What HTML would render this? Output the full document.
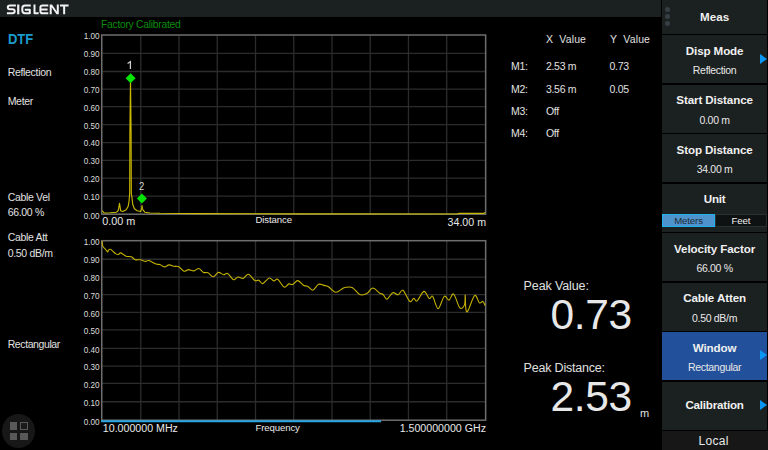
<!DOCTYPE html>
<html><head><meta charset="utf-8">
<style>
*{margin:0;padding:0;box-sizing:border-box}
html,body{width:768px;height:450px;overflow:hidden;background:#000;font-family:"Liberation Sans",sans-serif;color:#e6e6e6}
.a{position:absolute;white-space:nowrap;line-height:1}
#hdr{position:absolute;left:0;top:0;width:661px;height:17.25px;background:#1a2120}
#logo{left:7px;top:2.5px;font-size:13px;font-weight:bold;color:#f2f2f2;letter-spacing:0.9px}
.lbl{font-size:10.5px;color:#e0e0e0;letter-spacing:-0.32px}
.yl{font-size:7.6px;font-weight:bold;color:#dcdcdc;text-align:right;width:30px}
.pan{position:absolute;left:662px;width:105.2px;background:#1b2020}
.pt{position:absolute;left:0;width:105.2px;text-align:center;font-size:11.6px;font-weight:bold;color:#f0f0f0;line-height:1;white-space:nowrap}
.ps{position:absolute;left:0;width:105.2px;text-align:center;font-size:10.5px;letter-spacing:-0.32px;color:#e8e8e8;line-height:1;white-space:nowrap}
.tri{position:absolute;right:0;width:0;height:0;border-top:5px solid transparent;border-bottom:5px solid transparent;border-left:7.5px solid #0a96f4}
</style></head><body>
<div id="hdr"></div>
<svg style="position:absolute;left:0;top:0" width="72" height="18" viewBox="0 0 72 18">
<g fill="none" stroke="#f2f2f2" stroke-width="2.0" stroke-linecap="butt" stroke-linejoin="round">
<path d="M15.9,5.5 H10.0 Q7.8,5.5 7.8,7.35 Q7.8,9.25 10.0,9.25 H12.5 Q14.7,9.25 14.7,11.25 Q14.7,13.3 12.5,13.3 H6.9"/>
<path d="M18.25,4.5 V14.3" stroke-width="2.2"/>
<path d="M30.8,5.5 H25.0 Q22.3,5.5 22.3,8.2 V10.6 Q22.3,13.3 25.0,13.3 H29.8 V9.8 H24.8"/>
<path d="M34.5,4.5 V13.3 H38.7"/>
<path d="M48.3,5.5 H42.5 Q40.4,5.5 40.4,7.6 V11.2 Q40.4,13.3 42.5,13.3 H48.3 M40.4,9.4 H47.6"/>
<path d="M60.0,5.5 H68.6 M64.15,5.5 V14.3"/>
</g>
<polygon fill="#f2f2f2" points="49.7,4.5 52.0,4.5 56.8,11.6 56.8,4.5 58.8,4.5 58.8,14.3 56.5,14.3 51.7,7.2 51.7,14.3 49.7,14.3"/>
</svg>

<div class="a" style="left:7.8px;top:31.1px;font-size:15px;font-weight:bold;color:#1b9ccf;transform:scaleX(0.865);transform-origin:0 0">DTF</div>
<div class="a lbl" style="left:7.7px;top:66.9px">Reflection</div>
<div class="a lbl" style="left:7.7px;top:95.5px">Meter</div>
<div class="a lbl" style="left:7.7px;top:191.5px">Cable Vel</div>
<div class="a lbl" style="left:7.7px;top:206.9px">66.00 %</div>
<div class="a lbl" style="left:7.7px;top:231.6px">Cable Att</div>
<div class="a lbl" style="left:7.7px;top:247.6px">0.50 dB/m</div>
<div class="a lbl" style="left:7.7px;top:338.9px;letter-spacing:-0.4px">Rectangular</div>

<div class="a" style="left:101px;top:19.5px;font-size:10.3px;color:#0c8c0c;letter-spacing:-0.26px">Factory Calibrated</div>

<!-- graphs -->
<svg style="position:absolute;left:0;top:0" width="768" height="450" viewBox="0 0 768 450">
<g stroke="#2c2c2c" stroke-width="1.3" fill="none">
<line x1="140.80" y1="35.0" x2="140.80" y2="214.2"/>
<line x1="179.03" y1="35.0" x2="179.03" y2="214.2"/>
<line x1="217.27" y1="35.0" x2="217.27" y2="214.2"/>
<line x1="255.51" y1="35.0" x2="255.51" y2="214.2"/>
<line x1="293.75" y1="35.0" x2="293.75" y2="214.2"/>
<line x1="331.98" y1="35.0" x2="331.98" y2="214.2"/>
<line x1="370.22" y1="35.0" x2="370.22" y2="214.2"/>
<line x1="408.46" y1="35.0" x2="408.46" y2="214.2"/>
<line x1="446.69" y1="35.0" x2="446.69" y2="214.2"/>
<line x1="101.75" y1="53.35" x2="485.65" y2="53.35"/>
<line x1="101.75" y1="71.50" x2="485.65" y2="71.50"/>
<line x1="101.75" y1="89.05" x2="485.65" y2="89.05"/>
<line x1="101.75" y1="106.65" x2="485.65" y2="106.65"/>
<line x1="101.75" y1="124.60" x2="485.65" y2="124.60"/>
<line x1="101.75" y1="142.55" x2="485.65" y2="142.55"/>
<line x1="101.75" y1="160.35" x2="485.65" y2="160.35"/>
<line x1="101.75" y1="178.10" x2="485.65" y2="178.10"/>
<line x1="101.75" y1="196.10" x2="485.65" y2="196.10"/>
<line x1="140.80" y1="240.7" x2="140.80" y2="420.2"/>
<line x1="179.03" y1="240.7" x2="179.03" y2="420.2"/>
<line x1="217.27" y1="240.7" x2="217.27" y2="420.2"/>
<line x1="255.51" y1="240.7" x2="255.51" y2="420.2"/>
<line x1="293.75" y1="240.7" x2="293.75" y2="420.2"/>
<line x1="331.98" y1="240.7" x2="331.98" y2="420.2"/>
<line x1="370.22" y1="240.7" x2="370.22" y2="420.2"/>
<line x1="408.46" y1="240.7" x2="408.46" y2="420.2"/>
<line x1="446.69" y1="240.7" x2="446.69" y2="420.2"/>
<line x1="101.75" y1="259.25" x2="485.65" y2="259.25"/>
<line x1="101.75" y1="277.15" x2="485.65" y2="277.15"/>
<line x1="101.75" y1="294.65" x2="485.65" y2="294.65"/>
<line x1="101.75" y1="312.45" x2="485.65" y2="312.45"/>
<line x1="101.75" y1="329.90" x2="485.65" y2="329.90"/>
<line x1="101.75" y1="348.30" x2="485.65" y2="348.30"/>
<line x1="101.75" y1="366.10" x2="485.65" y2="366.10"/>
<line x1="101.75" y1="383.40" x2="485.65" y2="383.40"/>
<line x1="101.75" y1="401.75" x2="485.65" y2="401.75"/>
</g>
<g stroke="#6e6e6e" stroke-width="1.5" fill="none">
<rect x="101.75" y="35.0" width="383.9" height="179.2"/>
<rect x="101.75" y="240.7" width="383.9" height="179.5"/>
</g>
<g font-family="Liberation Sans" font-size="8.2" fill="#dcdcdc"><text x="99.6" y="38.90" text-anchor="end">1.00</text>
<text x="99.6" y="57.25" text-anchor="end">0.90</text>
<text x="99.6" y="75.40" text-anchor="end">0.80</text>
<text x="99.6" y="92.95" text-anchor="end">0.70</text>
<text x="99.6" y="110.55" text-anchor="end">0.60</text>
<text x="99.6" y="128.50" text-anchor="end">0.50</text>
<text x="99.6" y="146.45" text-anchor="end">0.40</text>
<text x="99.6" y="164.25" text-anchor="end">0.30</text>
<text x="99.6" y="182.00" text-anchor="end">0.20</text>
<text x="99.6" y="200.00" text-anchor="end">0.10</text>
<text x="99.6" y="219.00" text-anchor="end">0.00</text>
<text x="99.6" y="244.90" text-anchor="end">1.00</text>
<text x="99.6" y="263.45" text-anchor="end">0.90</text>
<text x="99.6" y="281.35" text-anchor="end">0.80</text>
<text x="99.6" y="298.85" text-anchor="end">0.70</text>
<text x="99.6" y="316.65" text-anchor="end">0.60</text>
<text x="99.6" y="334.10" text-anchor="end">0.50</text>
<text x="99.6" y="352.50" text-anchor="end">0.40</text>
<text x="99.6" y="370.30" text-anchor="end">0.30</text>
<text x="99.6" y="387.60" text-anchor="end">0.20</text>
<text x="99.6" y="405.95" text-anchor="end">0.10</text>
<text x="99.6" y="425.10" text-anchor="end">0.00</text></g>
<path d="M102.2,210.6 L104.1,213.0 L110.3,212.8 L116.5,212.2 L118.3,210.5 L119.5,203.3 L120.7,210.8 L122.7,211.5 L126.2,209.8 L128.2,206.3 L129.1,200.8 L129.7,193.5 L129.9,133.0 L130.5,78.5 L131.1,133.0 L131.3,193.5 L131.9,197.0 L132.7,204.3 L134.4,208.8 L137.2,210.8 L140.6,211.5 L141.7,208.4 L142.0,205.5 L142.4,208.4 L143.0,209.8 L144.8,212.2 L150.0,213.0 L160.0,213.3 L200.0,213.6 L300.0,213.8 L457.0,214.0 L459.0,213.4 L484.0,213.3 L485.2,212.6" fill="none" stroke="#c8b800" stroke-width="1.15" stroke-linejoin="round"/>
<path d="M102.00,241.00 C102.15,241.90 102.37,245.07 102.90,246.40 C103.43,247.73 104.42,248.08 105.20,249.00 C105.98,249.92 107.05,251.72 107.60,251.90 C108.15,252.08 108.03,250.53 108.50,250.10 C108.97,249.67 109.65,249.08 110.40,249.30 C111.15,249.52 112.13,250.68 113.00,251.40 C113.87,252.12 114.73,253.08 115.60,253.60 C116.47,254.12 117.33,254.62 118.20,254.50 C119.07,254.38 119.50,252.62 120.80,252.90 C122.10,253.18 124.25,255.55 126.00,256.20 C127.75,256.85 129.77,256.22 131.30,256.80 C132.83,257.38 133.68,259.20 135.20,259.70 C136.72,260.20 138.67,259.52 140.40,259.80 C142.13,260.08 144.20,261.28 145.60,261.40 C147.00,261.52 147.07,260.07 148.80,260.50 C150.53,260.93 154.15,263.32 156.00,264.00 C157.85,264.68 158.48,264.12 159.90,264.60 C161.32,265.08 162.98,266.85 164.50,266.90 C166.02,266.95 167.38,265.00 169.00,264.90 C170.62,264.80 172.57,266.00 174.20,266.30 C175.83,266.60 177.17,265.88 178.80,266.70 C180.43,267.52 182.38,270.72 184.00,271.20 C185.62,271.68 186.87,269.65 188.50,269.60 C190.13,269.55 192.07,271.08 193.80,270.90 C195.53,270.72 197.28,268.25 198.90,268.50 C200.52,268.75 201.98,271.68 203.50,272.40 C205.02,273.12 206.38,272.08 208.00,272.80 C209.62,273.52 211.47,276.77 213.20,276.70 C214.93,276.63 216.67,272.73 218.40,272.40 C220.13,272.07 222.07,274.53 223.60,274.70 C225.13,274.87 225.97,272.57 227.60,273.40 C229.23,274.23 231.67,279.10 233.40,279.70 C235.13,280.30 236.37,277.22 238.00,277.00 C239.63,276.78 241.47,278.85 243.20,278.40 C244.93,277.95 246.45,273.93 248.40,274.30 C250.35,274.67 253.17,279.62 254.90,280.60 C256.63,281.58 257.50,279.70 258.80,280.20 C260.10,280.70 260.97,283.97 262.70,283.60 C264.43,283.23 267.35,278.45 269.20,278.00 C271.05,277.55 272.38,280.68 273.80,280.90 C275.22,281.12 275.97,278.27 277.70,279.30 C279.43,280.33 282.35,286.33 284.20,287.10 C286.05,287.87 287.40,284.33 288.80,283.90 C290.20,283.47 291.10,285.05 292.60,284.50 C294.10,283.95 295.95,280.45 297.80,280.60 C299.65,280.75 302.07,284.45 303.70,285.40 C305.33,286.35 306.08,285.50 307.60,286.30 C309.12,287.10 310.97,290.53 312.80,290.20 C314.63,289.87 316.75,285.10 318.60,284.30 C320.45,283.50 322.27,285.00 323.90,285.40 C325.53,285.80 326.45,285.55 328.40,286.70 C330.35,287.85 333.22,292.02 335.60,292.30 C337.98,292.58 340.97,289.23 342.70,288.40 C344.43,287.57 344.37,287.42 346.00,287.30 C347.63,287.18 350.22,286.50 352.50,287.70 C354.78,288.90 357.32,293.52 359.70,294.50 C362.08,295.48 364.63,294.68 366.80,293.60 C368.97,292.52 370.53,288.07 372.70,288.00 C374.87,287.93 378.07,292.12 379.80,293.20 C381.53,294.28 381.90,293.52 383.10,294.50 C384.30,295.48 385.38,299.40 387.00,299.10 C388.62,298.80 390.93,293.42 392.80,292.70 C394.67,291.98 396.52,295.20 398.20,294.80 C399.88,294.40 400.98,289.20 402.90,290.30 C404.82,291.40 407.88,300.05 409.70,301.40 C411.52,302.75 412.57,298.48 413.80,298.40 C415.03,298.32 415.42,302.07 417.10,300.90 C418.78,299.73 421.87,291.82 423.90,291.40 C425.93,290.98 427.83,297.57 429.30,298.40 C430.77,299.23 431.23,294.70 432.70,296.40 C434.17,298.10 436.18,308.60 438.10,308.60 C440.02,308.60 442.38,297.82 444.20,296.40 C446.02,294.98 447.42,300.48 449.00,300.10 C450.58,299.72 451.90,292.80 453.70,294.10 C455.50,295.40 458.00,306.10 459.80,307.90 C461.60,309.70 463.60,307.05 464.50,304.90 C465.40,302.75 464.97,294.27 465.20,295.00 C465.43,295.73 465.43,306.70 465.90,309.30 C466.37,311.90 466.53,312.90 468.00,310.60 C469.47,308.30 472.80,296.78 474.70,295.50 C476.60,294.22 478.05,301.92 479.40,302.90 C480.75,303.88 481.85,300.97 482.80,301.40 C483.75,301.83 484.72,304.82 485.10,305.50" fill="none" stroke="#c4b200" stroke-width="1.1" stroke-linejoin="round"/>
<line x1="101" y1="421.2" x2="381" y2="421.2" stroke="#29a6e0" stroke-width="2.1"/>
<polygon points="130.6,73.3 135.6,78.3 130.6,83.3 125.6,78.3" fill="#06e406"/>
<polygon points="141.9,193.4 146.9,198.4 141.9,203.4 136.9,198.4" fill="#06e406"/>
<g font-family="Liberation Sans" font-size="9.8" fill="#d4d4d4" text-anchor="middle">
</g><path d="M127.6,63.6 L130.4,61.6 L130.4,69.1" fill="none" stroke="#d0d0d0" stroke-width="1.25" stroke-linejoin="miter"/><g font-family="Liberation Sans" font-size="9.8" fill="#d4d4d4" text-anchor="middle">
<text transform="translate(141.6,190.2) scale(0.86,1)" x="0" y="0" font-size="11">2</text>
</g>
<g font-family="Liberation Sans" fill="#e8e8e8">
<text x="102.2" y="225" font-size="10.8">0.00 m</text>
<text x="486" y="225.8" font-size="10.65" text-anchor="end">34.00 m</text>
<text x="255.5" y="223.2" font-size="9.6" letter-spacing="-0.1">Distance</text>
<text x="102.8" y="431.8" font-size="10.65">10.000000 MHz</text>
<text x="486" y="431.8" font-size="10.65" text-anchor="end">1.500000000 GHz</text>
<text x="255.5" y="430.5" font-size="9.6" letter-spacing="-0.12">Frequency</text>
</g>
</svg>

<!-- marker table -->
<div class="a lbl" style="left:546px;top:33.5px;letter-spacing:0.15px">X&nbsp; Value</div>
<div class="a lbl" style="left:610px;top:33.5px;letter-spacing:0.15px">Y&nbsp; Value</div>
<div class="a lbl" style="left:511px;top:61.2px">M1:</div>
<div class="a lbl" style="left:546px;top:61.2px">2.53 m</div>
<div class="a lbl" style="left:609.6px;top:61.2px">0.73</div>
<div class="a lbl" style="left:511px;top:83.7px">M2:</div>
<div class="a lbl" style="left:546px;top:83.7px">3.56 m</div>
<div class="a lbl" style="left:609.6px;top:83.7px">0.05</div>
<div class="a lbl" style="left:511px;top:106.2px">M3:</div>
<div class="a lbl" style="left:546px;top:106.2px">Off</div>
<div class="a lbl" style="left:511px;top:128.2px">M4:</div>
<div class="a lbl" style="left:546px;top:128.2px">Off</div>

<div class="a" style="left:523.6px;top:279.5px;font-size:12.5px;letter-spacing:-0.12px;color:#e0e0e0">Peak Value:</div>
<div class="a" style="left:550.5px;top:294.1px;font-size:42.5px;letter-spacing:-0.4px;color:#e8e8e8">0.73</div>
<div class="a" style="left:523.6px;top:361.5px;font-size:12.5px;letter-spacing:-0.2px;color:#e0e0e0">Peak Distance:</div>
<div class="a" style="left:550.5px;top:376.3px;font-size:42.5px;letter-spacing:-0.4px;color:#e8e8e8">2.53</div>
<div class="a" style="left:640px;top:408px;font-size:11px;color:#e0e0e0">m</div>

<!-- right panel -->
<div style="position:absolute;left:661px;top:0;width:1px;height:450px;background:#000"></div>
<div class="pan" style="top:0;height:33.75px">
  <div style="position:absolute;left:3px;top:7px;width:5px;height:5px;border-radius:50%;background:#364044"></div>
  <div style="position:absolute;left:3px;top:14px;width:5px;height:5px;border-radius:50%;background:#364044"></div>
  <div style="position:absolute;left:3px;top:21px;width:5px;height:5px;border-radius:50%;background:#364044"></div>
  <div class="pt" style="top:10.6px">Meas</div>
</div>
<div class="pan" style="top:35.25px;height:48px"><div class="pt" style="top:9.5px;letter-spacing:-0.1px">Disp Mode</div><div class="ps" style="top:30.2px">Reflection</div><div class="tri" style="top:18.4px"></div></div>
<div class="pan" style="top:84.75px;height:48px"><div class="pt" style="top:9.5px;letter-spacing:-0.1px">Start Distance</div><div class="ps" style="top:30.2px">0.00 m</div></div>
<div class="pan" style="top:134.25px;height:48px"><div class="pt" style="top:9.5px;letter-spacing:-0.1px">Stop Distance</div><div class="ps" style="top:30.2px">34.00 m</div></div>
<div class="pan" style="top:183.75px;height:48px"><div class="pt" style="top:9.6px;letter-spacing:-0.2px">Unit</div>
  <div style="position:absolute;left:0;top:30px;width:53px;height:13.5px;background:#4e93cc;border:1px solid #1eb0f0"></div>
  <div style="position:absolute;left:53px;top:30px;width:52px;height:13.5px;background:#0f1212;border:1px solid #2a2f2f"></div>
  <div class="ps" style="left:0;width:53px;top:32.2px;font-size:9.6px;letter-spacing:-0.1px;color:#1f2a36">Meters</div>
  <div class="ps" style="left:53px;width:52px;top:32.2px;font-size:9.6px;letter-spacing:-0.1px;color:#f0f0f0">Feet</div>
</div>
<div class="pan" style="top:233.25px;height:48px"><div class="pt" style="top:9.5px;letter-spacing:-0.1px">Velocity Factor</div><div class="ps" style="top:30.2px">66.00 %</div></div>
<div class="pan" style="top:282.75px;height:48px"><div class="pt" style="top:9.5px;letter-spacing:-0.1px">Cable Atten</div><div class="ps" style="top:30.2px">0.50 dB/m</div></div>
<div class="pan" style="top:332.25px;height:48px;background:#22509a"><div class="pt" style="top:9.5px;letter-spacing:-0.1px">Window</div><div class="ps" style="top:30.2px">Rectangular</div><div class="tri" style="top:18.1px"></div></div>
<div class="pan" style="top:381.75px;height:48px"><div class="pt" style="top:17.3px;letter-spacing:-0.2px">Calibration</div><div class="tri" style="top:18.2px"></div></div>
<div class="pan" style="top:431.25px;height:19px;width:106px;background:#171717"><div class="ps" style="top:4px;left:-1px;font-size:12px;letter-spacing:0.3px">Local</div></div>

<!-- bottom-left icon -->
<div style="position:absolute;left:1.6px;top:414.2px;width:33.4px;height:33.4px;border-radius:50%;background:#171717"></div>
<div style="position:absolute;left:9.8px;top:422px;width:7.4px;height:7.6px;background:#585858"></div>
<div style="position:absolute;left:20.2px;top:422px;width:7.6px;height:7.6px;border:1.1px solid #585858;background:#1a1a1a"></div>
<div style="position:absolute;left:9.8px;top:432.6px;width:7.4px;height:7.6px;background:#585858"></div>
<div style="position:absolute;left:20.2px;top:432.6px;width:7.6px;height:7.6px;background:#585858"></div>
</body></html>
